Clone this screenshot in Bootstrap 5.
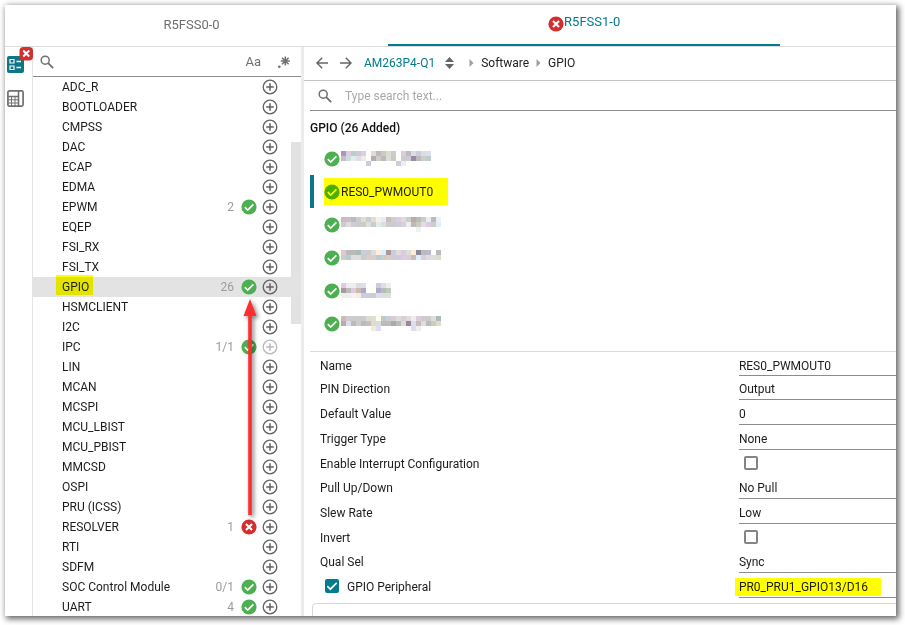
<!DOCTYPE html>
<html lang="en">
<head>
<meta charset="utf-8">
<meta name="viewport" content="width=device-width, initial-scale=1">
<title>SysConfig - GPIO</title>
<link href="https://cdn.jsdelivr.net/npm/bootstrap@5.3.0/dist/css/bootstrap.min.css" rel="stylesheet">
<style>
:root{--teal:#007c8c;--line:#8c8c8c;--ink:#1c1c1c}
body{font:12px/20px Roboto,"Liberation Sans",sans-serif;color:var(--ink);background:#fff;padding:5px 9px 9px 5px}
button,input,select{font:inherit;color:inherit}
svg{display:block;flex:none}
.app-window{box-shadow:2px 2px 6px 1px rgba(0,0,0,.6);background:#fff}
.plain{border:0;background:none;padding:0}
.core-tabs{height:42px;border-bottom:1px solid #dcdcdc}
.core-tab{color:#6e6e6e;width:43%;padding-right:10px;padding-bottom:2px;font-size:13px}
.core-tab.active{color:var(--teal);width:44%;padding-right:0;border-bottom:2px solid var(--teal)}
.core-tab.active span{padding-bottom:3px}
.rail{width:28px;border-right:1px solid #e4e4e4;padding:9px 2px}
.rail-badge{top:0;right:-1px}
.rail-gap{margin-top:17px}
.tree-pane{width:268px}
.tree-search{height:30px;border-bottom:1px solid var(--line);padding:0 10px 0 7px;color:#707070}
.bare-input{border:0;outline:0;background:none;min-width:0;padding:0}
.bare-input::placeholder{color:#a9a9a9;opacity:1}
.case-label{font-size:13px}
.tree-item{height:20px;padding:0 23px 0 29px}
.tree-item.active{background:#e3e3e3}
.tree-item a{color:inherit;text-decoration:none}
.tally{color:#9b9b9b;margin-right:7px}
.add-btn{color:#616161;margin-left:5px}
.add-btn:disabled{color:#b8b8b8}
.thumb{right:0;top:95px;width:10px;height:182px;background:#e2e2e2}
.arrow{left:208px;top:251px;filter:drop-shadow(2px 2px 2px rgba(0,0,0,.5))}
.hl{background:#ff0;mix-blend-mode:multiply;pointer-events:none}
.hl-tree{left:-6px;right:-4px;top:-2px;height:20px}
.hl-inst{left:0;width:124px;top:-4px;height:27px}
.hl-value{left:-4px;width:146px;top:5px;height:18px}
.gutter{width:3px;background:#ececec}
.crumbs{height:34px;border-bottom:1px solid #c4c4c4;padding:0 0 2px 12px;color:#222}
.crumbs a{color:inherit;text-decoration:none}
.crumbs a.device{color:var(--teal)}
.sorter{margin-left:10px}
.crumb-sep{margin:0 7px}
.first-sep{margin-left:15px}
.find{height:30px;border-bottom:1px solid var(--line);margin-left:6px;padding-left:8px;color:#707070}
.find-input{margin-left:13px}
.added{margin:7px 6px 4px;height:20px;font-size:12px;line-height:20px;font-weight:500;color:#111}
.inst{height:33px;margin-left:6px;border-left:4px solid transparent;padding-left:10px}
.inst.active{border-color:#0e7686}
.inst a{color:inherit;text-decoration:none}
.inst-name{margin-left:1px}
.props{margin-left:6px;padding-left:10px;border-top:1px solid #dcdcdc;margin-top:11px}
.prop{display:grid;grid-template-columns:8fr 3fr;height:25px}
.prop.first{height:23px}
.prop.tick{height:24px}
.prop label{padding-top:4px}
.field{border:0;border-bottom:1px solid var(--line);border-radius:0;outline:0;appearance:none;background:none;padding:4px 0 0;width:100%;height:100%}
.box{appearance:none;flex:none;width:14px;height:14px;border:2px solid #858585;border-radius:2px;margin:6px 0 0 5px}
.box:checked{background:var(--teal) url("data:image/svg+xml,%3Csvg xmlns='http://www.w3.org/2000/svg' viewBox='0 0 14 14'%3E%3Cpath d='M2.2 7l3.2 3.2 6.4-6.4' fill='none' stroke='white' stroke-width='1.7'/%3E%3C/svg%3E") center/14px;border-color:var(--teal)}
.group{margin:5px -10px 0 -8px;height:40px;border:1px solid #d8d8d8;border-radius:4px}
</style>
<script src="https://cdn.jsdelivr.net/npm/bootstrap@5.3.0/dist/js/bootstrap.bundle.min.js"></script>
</head>
<body class="vh-100 overflow-hidden">
<svg class="d-none">
<symbol id="ok" viewBox="0 0 16 16"><circle cx="8" cy="8" r="7.6" fill="#4caf50"/><path d="M3.8 8.2l2.9 2.9 5.7-5.7" fill="none" stroke="#fff" stroke-width="1.7"/></symbol>
<symbol id="bad" viewBox="0 0 16 16"><circle cx="8" cy="8" r="7.6" fill="#d32f2f"/><path d="M5 5l6 6M11 5l-6 6" stroke="#fff" stroke-width="2.1"/></symbol>
<symbol id="add" viewBox="0 0 16 16"><g fill="none" stroke="currentColor"><circle cx="8" cy="8" r="6.8" stroke-width="1.3"/><path d="M8 4.2v7.6M4.2 8h7.6" stroke-width="1.5"/></g></symbol>
<symbol id="lens" viewBox="0 0 14 14"><g fill="none" stroke="currentColor"><circle cx="5.2" cy="5.2" r="4" stroke-width="1.5"/><path d="M8.2 8.2l4.9 4.9" stroke-width="1.9"/></g></symbol>
<symbol id="caret" viewBox="0 0 5 8"><path d="M.5 0l4 4-4 4z" fill="#a0a0a0"/></symbol>
</svg>
<div class="app-window h-100 overflow-hidden d-flex flex-column">
<nav class="core-tabs d-flex flex-shrink-0">
<button class="core-tab plain">R5FSS0-0</button>
<button class="core-tab plain active d-flex align-items-center justify-content-center"><svg width="16" height="16"><use href="#bad"/></svg><span>R5FSS1-0</span></button>
</nav>
<div class="d-flex flex-grow-1 overflow-hidden">
<aside class="rail position-relative flex-shrink-0">
<button class="plain d-block" aria-label="Configuration"><svg width="17" height="17" viewBox="0 0 17 17"><rect width="17" height="17" rx="2" fill="#0e7686"/><g fill="none" stroke="#fff"><path d="M3 3.5h4v3.5h-4zM3 10h4v3.5h-4z" stroke-width="1.2"/><path d="M9.5 5.5h4.5M9.5 11.5h4.5" stroke-width="1.6"/></g></svg></button>
<svg class="rail-badge position-absolute" width="14" height="14" viewBox="0 0 14 14"><rect x=".5" width="13.5" height="13.5" rx="4" fill="#d32f2f"/><path d="M4.2 3.5l6 6M10.2 3.5l-6 6" stroke="#fff" stroke-width="2"/></svg>
<button class="plain d-block rail-gap" aria-label="Devices"><svg width="17" height="17" viewBox="0 0 17 17" fill="none" stroke="#707070"><rect x=".9" y=".9" width="15.2" height="15.2" rx="1.5" stroke-width="1.7"/><path d="M1 6.5h10.5M11.5 1v15" stroke-width="1.6"/><path d="M1 9.8h10M1 13h10M4.5 6.5v9.5M8 6.5v9.5" stroke-width="1"/></svg></button>
</aside>
<section class="tree-pane position-relative flex-shrink-0">
<div class="tree-search d-flex align-items-center">
<svg width="14" height="14"><use href="#lens"/></svg>
<input class="bare-input flex-grow-1" aria-label="Filter modules">
<button class="plain me-3" aria-label="Match case"><span class="case-label">Aa</span></button>
<button class="plain" aria-label="Regular expression"><svg width="14" height="14" viewBox="0 0 14 14"><circle cx="2.3" cy="11.7" r="1.3" fill="#707070"/><path d="M8.3 1.5v9M3.8 6h9M5 2.8l6.6 6.4M11.6 2.8L5 9.2" stroke="#707070" stroke-width="1.5"/></svg></button>
</div>
<div class="thumb position-absolute"></div>
<div class="tree-list position-relative"></div>
<svg class="arrow position-absolute" width="18" height="220" viewBox="0 0 18 220"><path d="M9 1L15.5 18H10.8V217H7.2V18H2.5z" fill="#ff2e2e"/></svg>
</section>
<div class="gutter flex-shrink-0"></div>
<main class="flex-grow-1 overflow-hidden">
<nav class="crumbs d-flex align-items-center" aria-label="Breadcrumb">
<button class="plain" aria-label="Back"><svg width="12" height="12" viewBox="0 0 12 12" fill="none" stroke="#666" stroke-width="1.4"><path d="M12 6H1M6.2.8L1 6l5.2 5.2"/></svg></button>
<button class="plain ms-2 px-1" aria-label="Forward"><svg width="12" height="12" viewBox="0 0 12 12" fill="none" stroke="#666" stroke-width="1.4"><path d="M0 6h11M5.8.8L11 6l-5.2 5.2"/></svg></button>
<a href="#" class="device ms-2">AM263P4-Q1</a>
<button class="plain sorter" aria-label="Switch device"><svg width="9" height="12" viewBox="0 0 9 12" fill="#666"><path d="M0 5l4.5-5L9 5zM0 7l4.5 5L9 7z"/></svg></button>
<svg class="crumb-sep first-sep" width="5" height="8"><use href="#caret"/></svg>
<a href="#">Software</a>
<svg class="crumb-sep" width="5" height="8"><use href="#caret"/></svg>
<a href="#">GPIO</a>
</nav>
<div class="find d-flex align-items-center">
<svg width="14" height="14"><use href="#lens"/></svg>
<input class="bare-input find-input flex-grow-1" placeholder="Type search text..." aria-label="Type search text">
</div>
<h1 class="added">GPIO (26 Added)</h1>
<div class="instances"></div>
<form class="props">
<div class="prop first"><label for="f1">Name</label><input id="f1" class="field" value="RES0_PWMOUT0"></div>
<div class="prop"><label for="f2">PIN Direction</label><select id="f2" class="field"><option>Output</option></select></div>
<div class="prop"><label for="f3">Default Value</label><select id="f3" class="field"><option>0</option></select></div>
<div class="prop"><label for="f4">Trigger Type</label><select id="f4" class="field"><option>None</option></select></div>
<div class="prop tick"><label for="f5">Enable Interrupt Configuration</label><input id="f5" type="checkbox" class="box"></div>
<div class="prop"><label for="f6">Pull Up/Down</label><select id="f6" class="field"><option>No Pull</option></select></div>
<div class="prop"><label for="f7">Slew Rate</label><select id="f7" class="field"><option>Low</option></select></div>
<div class="prop tick"><label for="f8">Invert</label><input id="f8" type="checkbox" class="box"></div>
<div class="prop"><label for="f9">Qual Sel</label><select id="f9" class="field"><option>Sync</option></select></div>
<div class="prop"><div class="d-flex"><input id="f10" type="checkbox" class="box" checked><label for="f10" class="ms-2">GPIO Peripheral</label></div><div class="position-relative"><select class="field" aria-label="GPIO Peripheral pin"><option>PR0_PRU1_GPIO13/D16</option></select><div class="hl hl-value position-absolute"></div></div></div>
<div class="group"></div>
</form>
</main>
</div>
</div>
<script>
// name, count, status, add button disabled
const modules = [
 ["ADC_R"],["BOOTLOADER"],["CMPSS"],["DAC"],["ECAP"],["EDMA"],["EPWM","2","ok"],["EQEP"],["FSI_RX"],["FSI_TX"],
 ["GPIO","26","ok"],["HSMCLIENT"],["I2C"],["IPC","1/1","ok",true],["LIN"],["MCAN"],["MCSPI"],["MCU_LBIST"],["MCU_PBIST"],
 ["MMCSD"],["OSPI"],["PRU (ICSS)"],["RESOLVER","1","bad"],["RTI"],["SDFM"],["SOC Control Module","0/1","ok"],["UART","4","ok"]
];
const icon = id => `<svg width="16" height="16"><use href="#${id}"/></svg>`;
document.querySelector(".tree-list").innerHTML = modules.map(([name, count, state, off]) => `
<div class="tree-item d-flex align-items-center${name === "GPIO" ? " active" : ""}">
<a href="#" class="position-relative me-auto">${name}${name === "GPIO" ? '<span class="hl hl-tree position-absolute"></span>' : ""}</a>
${count ? `<span class="tally">${count}</span>${icon(state)}` : ""}
<button class="plain add-btn" aria-label="Add ${name}"${off ? " disabled" : ""}>${icon("add")}</button></div>`).join("");

// Redacted instance names: rows of 5px cells, three hex digits each, "..." leaves a gap
const instances = [
 ["a9b dcd bcc ccc dce ... ddd bbb ccb ddc ccc ... dcd bbc ddd ccd ddd dde","cbc cdd dee dde eed ... baa ccc bbb ddd ccb ... ccc ccc 98a bbb ccc bcc","... ... ... ... ... ccd ... ... ... ... ... ccd eee ... ... ... ... ..."],
 null,
 ["cbb cbc bbb ccc ddd ccc ddd fed def cbb ccd dcd ddd ccc baa bbb ccc eee bbb eef","ccc ddd ccd ccc ccb ddd ccc dee ddd ccc ccc ccd dcd eee bbb ccb dde dcd ccc def","... ... ... ... ... ... ... ... ... ... ... ... ... ... ... eef ... ... ... ..."],
 ["dcc bbb bbb abb ccd ccc ddd fed def a99 ccd ddd dcd ddd fec 889 bbb bbc ... bbb","ccc bcc ddd ddd ccc dcc dcc bcc ccc dcb ccd ccd dcd dcd cbb def dcd ddd ddd ddc","... ... ... ... ... ... ... ... ... ... ... ... ... ... ... ... ... ... ... ..."],
 ["dcd eee eee ddd dde ... ffe ccd dde eee","a99 bbb dcd cba aac ... ffe aac bbb bcb","eee eee fee eee ccd ccd ccc dde ddd ddd"],
 ["cbb ccc ccc ccc ccc ddc ddd ffe bcc ccd dcc ddd dcd ddd eee dcd ccc ccc ddd abb","baa dde bbb ccc bbb cbb ddc ddd bbb bbb aaa bbb ddc 989 dde cbb ddd bbb ccb ddc","... ... ... ... ... ... eed dde ... ... ... ... ... ... dde eee ... ... ... ..."]
];
const mosaic = rows => {
  const cells = rows.flatMap((r, y) => r.split(" ").map((c, x) => c === "..." ? "" : `<rect x="${x*5}" y="${y*5}" width="5" height="5" fill="#${c}"/>`));
  return `<svg width="100" height="15" shape-rendering="crispEdges" aria-hidden="true">${cells.join("")}</svg>`;
};
document.querySelector(".instances").innerHTML = instances.map(d => d
 ? `<div class="inst d-flex align-items-center">${icon("ok")}<span class="inst-name">${mosaic(d)}</span></div>`
 : `<div class="inst active d-flex align-items-center"><div class="position-relative d-flex align-items-center">${icon("ok")}<a href="#" class="inst-name">RES0_PWMOUT0</a><span class="hl hl-inst position-absolute"></span></div></div>`).join("");
</script>
</body>
</html>
